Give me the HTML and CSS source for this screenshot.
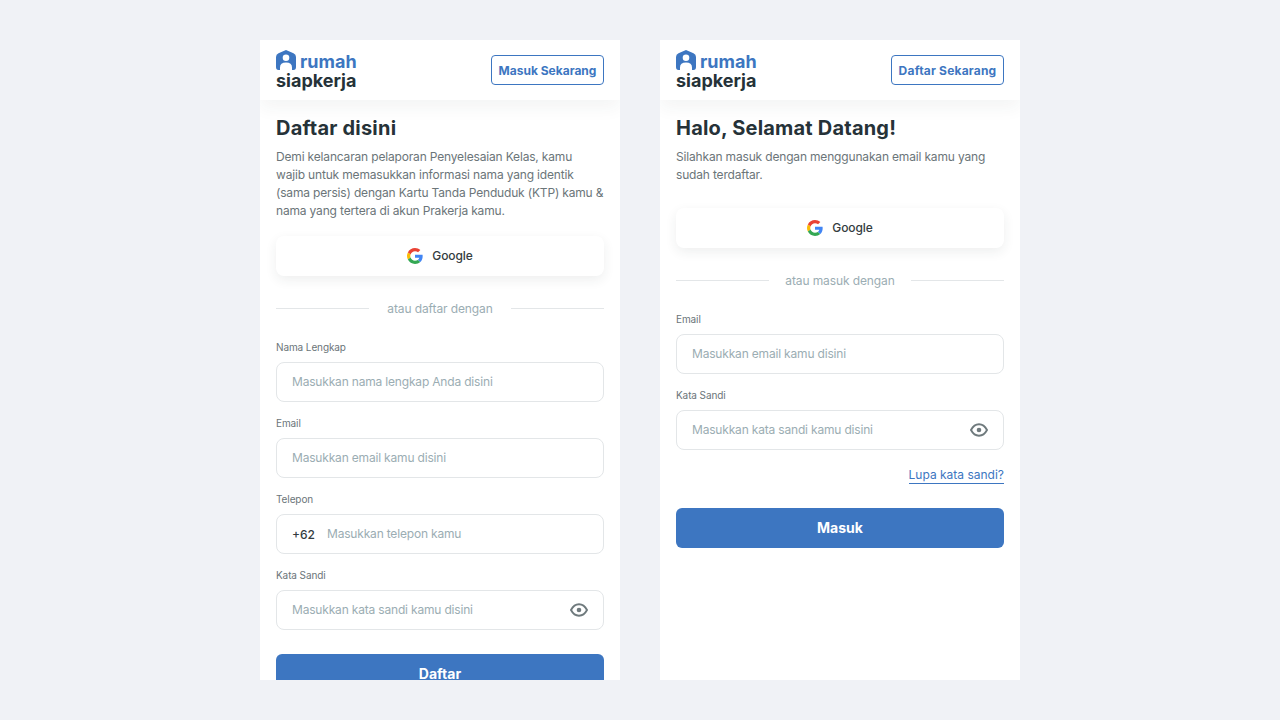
FILE: index.html
```html
<!DOCTYPE html>
<html lang="en">
<head>
    <meta charset="UTF-8">
    <meta name="viewport" content="width=device-width, initial-scale=1.0">
    <title>Rumah Siapkerja</title>
    <link rel="stylesheet" href="styles.css">
</head>
<body>
    <div class="panel">
        <div class="header">
            <div class="logo">
                <div class="logo-top">
                    <svg class="logo-icon" viewBox="0 0 20 20"><path fill="#3d76c1" fill-rule="evenodd" d="M10 0 L17.5 3.2 Q20 4.3 20 7 V17 Q20 20 17.5 20 H16 V17.5 Q16 12.5 10 12.5 Q4 12.5 4 17.5 V20 H2.5 Q0 20 0 17 V7 Q0 4.3 2.5 3.2 Z M10 4.5 A3.3 3.3 0 1 0 10 11.1 A3.3 3.3 0 1 0 10 4.5 Z"/></svg>
                    <span class="logo-rumah">rumah</span>
                </div>
                <div class="logo-name">siapkerja</div>
            </div>
            <a class="header-btn">Masuk Sekarang</a>
        </div>
        <div class="content">
            <h2>Daftar disini</h2>
            <p class="intro">Demi kelancaran pelaporan Penyelesaian Kelas, kamu wajib untuk memasukkan informasi nama yang identik (sama persis) dengan Kartu Tanda Penduduk (KTP) kamu &amp; nama yang tertera di akun Prakerja kamu.</p>
            <button class="google-btn">
                <svg class="google-icon" viewBox="0 0 48 48"><path fill="#EA4335" d="M24 9.500c3.500 0 6.700 1.200 9.200 3.600l6.900-6.900C35.900 2.400 30.500 0 24 0 14.600 0 6.500 5.400 2.600 13.200l8 6.200C12.500 13.700 17.800 9.500 24 9.500z"/><path fill="#4285F4" d="M47 24.500c0-1.600-.1-3.100-.4-4.500H24v9h12.900c-.6 3-2.200 5.500-4.700 7.200l7.700 6C44.400 38 47 31.800 47 24.500z"/><path fill="#FBBC05" d="M10.600 28.600c-.5-1.400-.8-3-.8-4.600s.3-3.200.8-4.600l-8-6.200C.9 16.500 0 20.100 0 24s.9 7.500 2.600 10.800l8-6.200z"/><path fill="#34A853" d="M24 48c6.500 0 11.900-2.100 15.900-5.800l-7.700-6c-2.200 1.500-4.900 2.300-8.200 2.300-6.200 0-11.500-4.200-13.400-9.900l-8 6.200C6.500 42.600 14.600 48 24 48z"/></svg>
                <span>Google</span>
            </button>
            <div class="divider"><span>atau daftar dengan</span></div>
            <label class="field-label">Nama Lengkap</label>
            <div class="field"><input type="text" placeholder="Masukkan nama lengkap Anda disini"></div>
            <label class="field-label">Email</label>
            <div class="field"><input type="text" placeholder="Masukkan email kamu disini"></div>
            <label class="field-label">Telepon</label>
            <div class="field"><span class="prefix">+62</span><input type="text" placeholder="Masukkan telepon kamu"></div>
            <label class="field-label">Kata Sandi</label>
            <div class="field">
                <input type="password" placeholder="Masukkan kata sandi kamu disini">
                <svg class="eye" viewBox="0 0 18 14"><path fill="none" stroke="#6f7a7d" stroke-width="1.900" d="M1 7 C3 3.200 5.800 1.300 9 1.300 S15 3.200 17 7 C15 10.800 12.200 12.700 9 12.700 S3 10.800 1 7 Z"/><circle cx="9" cy="7" r="2.300" fill="#6f7a7d"/></svg>
            </div>
            <button class="submit-btn">Daftar</button>
        </div>
    </div>

    <div class="panel">
        <div class="header">
            <div class="logo">
                <div class="logo-top">
                    <svg class="logo-icon" viewBox="0 0 20 20"><path fill="#3d76c1" fill-rule="evenodd" d="M10 0 L17.5 3.2 Q20 4.3 20 7 V17 Q20 20 17.5 20 H16 V17.5 Q16 12.5 10 12.5 Q4 12.5 4 17.5 V20 H2.5 Q0 20 0 17 V7 Q0 4.3 2.5 3.2 Z M10 4.5 A3.3 3.3 0 1 0 10 11.1 A3.3 3.3 0 1 0 10 4.5 Z"/></svg>
                    <span class="logo-rumah">rumah</span>
                </div>
                <div class="logo-name">siapkerja</div>
            </div>
            <a class="header-btn header-btn-daftar">Daftar Sekarang</a>
        </div>
        <div class="content">
            <h2>Halo, Selamat Datang!</h2>
            <p class="intro intro-login">Silahkan masuk dengan menggunakan email kamu yang sudah terdaftar.</p>
            <button class="google-btn">
                <svg class="google-icon" viewBox="0 0 48 48"><path fill="#EA4335" d="M24 9.500c3.500 0 6.700 1.200 9.200 3.600l6.900-6.900C35.900 2.400 30.500 0 24 0 14.600 0 6.500 5.400 2.600 13.200l8 6.200C12.500 13.700 17.800 9.500 24 9.500z"/><path fill="#4285F4" d="M47 24.500c0-1.600-.1-3.100-.4-4.500H24v9h12.900c-.6 3-2.200 5.500-4.700 7.200l7.700 6C44.400 38 47 31.800 47 24.500z"/><path fill="#FBBC05" d="M10.600 28.600c-.5-1.400-.8-3-.8-4.600s.3-3.200.8-4.600l-8-6.200C.9 16.500 0 20.100 0 24s.9 7.500 2.600 10.800l8-6.200z"/><path fill="#34A853" d="M24 48c6.500 0 11.900-2.100 15.900-5.800l-7.700-6c-2.200 1.500-4.900 2.300-8.200 2.300-6.200 0-11.500-4.200-13.400-9.900l-8 6.200C6.500 42.600 14.600 48 24 48z"/></svg>
                <span>Google</span>
            </button>
            <div class="divider"><span>atau masuk dengan</span></div>
            <label class="field-label">Email</label>
            <div class="field"><input type="text" placeholder="Masukkan email kamu disini"></div>
            <label class="field-label">Kata Sandi</label>
            <div class="field">
                <input type="password" placeholder="Masukkan kata sandi kamu disini">
                <svg class="eye" viewBox="0 0 18 14"><path fill="none" stroke="#6f7a7d" stroke-width="1.900" d="M1 7 C3 3.200 5.800 1.300 9 1.300 S15 3.200 17 7 C15 10.800 12.200 12.700 9 12.700 S3 10.800 1 7 Z"/><circle cx="9" cy="7" r="2.300" fill="#6f7a7d"/></svg>
            </div>
            <div class="forgot-row"><a class="forgot">Lupa kata sandi?</a></div>
            <button class="submit-btn">Masuk</button>
        </div>
    </div>
</body>
</html>
```

FILE: styles.css
```css
* {
    box-sizing: border-box;
}

html, body {
    height: 100%;
}

body {
    font-family: Inter, Roboto, sans-serif;
    margin: 0;
    padding-top: 40px;
    background-color: #f0f2f6;
    display: flex;
    justify-content: center;
    align-items: flex-start;
    gap: 40px;
    overflow: hidden;
}

.panel {
    width: 360px;
    height: 640px;
    background: white;
    overflow: hidden;
    flex-shrink: 0;
}

.header {
    height: 60px;
    padding: 0 16px;
    display: flex;
    align-items: center;
    justify-content: space-between;
    background: white;
    box-shadow: 0px 8px 16px rgba(38, 50, 56, 0.05);
}

.logo {
    display: flex;
    flex-direction: column;
}

.logo-top {
    display: flex;
    align-items: flex-start;
    gap: 4px;
    height: 20px;
}

.logo-icon {
    width: 20px;
    height: 20px;
}

.logo-rumah {
    font-size: 18px;
    line-height: 24px;
    font-weight: 700;
    color: #3d76c1;
}

.logo-name {
    height: 20px;
    font-size: 18px;
    line-height: 22px;
    font-weight: 700;
    color: #263238;
}

.header-btn {
    width: 113px;
    height: 30px;
    display: flex;
    align-items: center;
    justify-content: center;
    border: 1px solid #3d76c1;
    border-radius: 4px;
    font-size: 12px;
    font-weight: 700;
    color: #3d76c1;
}

.header-btn-daftar {
    letter-spacing: 0.2px;
}

.content {
    padding: 16px 16px 0;
}

h2 {
    margin: 0 0 8px;
    font-size: 20px;
    line-height: 24px;
    font-weight: 700;
    letter-spacing: 0.2px;
    color: #263238;
}

.intro {
    margin: 0 0 16px;
    font-size: 12px;
    line-height: 18px;
    letter-spacing: -0.17px;
    color: #6b7579;
}

.intro-login {
    margin-bottom: 24px;
}

.google-btn {
    width: 100%;
    height: 40px;
    padding: 0 0 2px;
    border: none;
    border-radius: 8px;
    background: white;
    box-shadow: 0px 4px 12px rgba(38, 50, 56, 0.08);
    display: flex;
    align-items: center;
    justify-content: center;
    gap: 9px;
    font-family: inherit;
    font-size: 12px;
    font-weight: 500;
    letter-spacing: -0.1px;
    color: #333c40;
}

.google-icon {
    width: 16px;
    height: 16px;
    margin-top: 2px;
}

.divider {
    margin: 24px 0;
    height: 16px;
    display: grid;
    grid-template-columns: 1fr 142px 1fr;
    align-items: center;
    text-align: center;
    font-size: 12px;
    letter-spacing: -0.1px;
    color: #9badb3;
}

.divider::before, .divider::after {
    content: "";
    border-top: 1px solid #e3e6e8;
}

.field-label {
    display: block;
    margin: 0 0 8px;
    font-size: 10px;
    line-height: 14px;
    letter-spacing: -0.1px;
    color: #6b7579;
}

.field {
    height: 40px;
    margin-bottom: 14px;
    padding: 0 15px;
    display: flex;
    align-items: center;
    border: 1px solid #e3e6e8;
    border-radius: 8px;
}

.field input {
    flex: 1;
    min-width: 0;
    border: none;
    outline: none;
    padding: 0 0 2px;
    font-family: inherit;
    font-size: 12px;
    letter-spacing: -0.18px;
    color: #263238;
}

.field input::placeholder {
    color: #9badb3;
    opacity: 1;
}

.prefix {
    margin-right: 12px;
    font-size: 12px;
    font-weight: 500;
    color: #333c40;
}

.eye {
    width: 18px;
    height: 14px;
    margin-left: 8px;
}

.forgot-row {
    margin-top: -14px;
    padding-top: 17px;
    display: flex;
    justify-content: flex-end;
}

.forgot {
    height: 17px;
    border-bottom: 1px solid #3d76c1;
    font-size: 12px;
    line-height: 16px;
    color: #3d76c1;
}

.submit-btn {
    width: 100%;
    height: 40px;
    margin-top: 10px;
    padding: 0 0 2px;
    border: none;
    border-radius: 6px;
    background: #3d76c1;
    font-family: inherit;
    font-size: 14px;
    font-weight: 700;
    color: white;
}

.forgot-row + .submit-btn {
    margin-top: 24px;
}
```
